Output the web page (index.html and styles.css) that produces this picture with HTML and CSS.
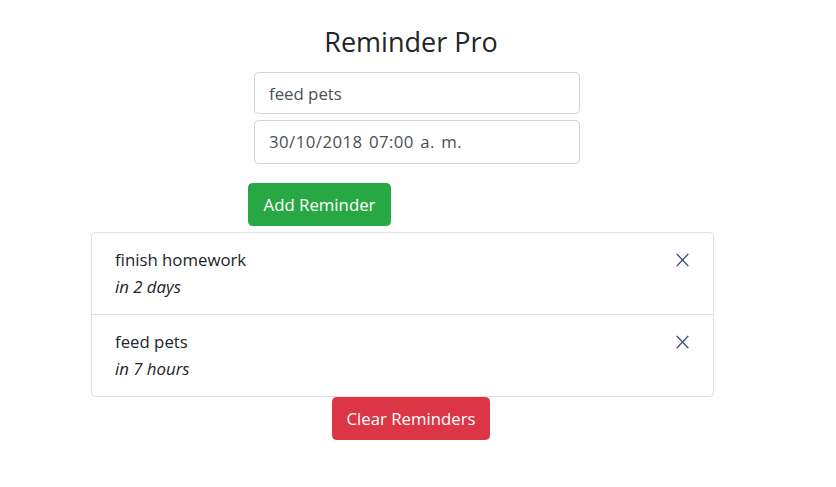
FILE: index.html
```html
<!DOCTYPE html>
<html>
<head>
<meta charset="utf-8">
<link rel="stylesheet" href="styles.css">
</head>
<body>
<div class="app">
  <h3 class="title">Reminder Pro</h3>
  <div class="form">
    <input class="field" type="text" value="feed pets">
    <div class="field field-date">30/10/2018 07:00 a. m.</div>
  </div>
  <button class="btn btn-add">Add Reminder</button>
  <ul class="list">
    <li class="item">
      <div class="item-body">
        <div class="item-text">finish homework</div>
        <div class="item-due">in 2 days</div>
      </div>
      <span class="delete"><svg width="13" height="14" viewBox="0 0 13 14"><path d="M0.7 0.9 L12.3 13.1 M12.3 0.9 L0.7 13.1" stroke="#2b3f7e" stroke-width="1.3" fill="none"/></svg></span>
    </li>
    <li class="item">
      <div class="item-body">
        <div class="item-text">feed pets</div>
        <div class="item-due">in 7 hours</div>
      </div>
      <span class="delete"><svg width="13" height="14" viewBox="0 0 13 14"><path d="M0.7 0.9 L12.3 13.1 M12.3 0.9 L0.7 13.1" stroke="#2b3f7e" stroke-width="1.3" fill="none"/></svg></span>
    </li>
  </ul>
  <button class="btn btn-clear">Clear Reminders</button>
</div>
</body>
</html>
```
FILE: styles.css
```css
* { box-sizing: border-box; }
html, body { margin: 0; padding: 0; background: #fff; }
body {
  font-family: "Open Sans", "Noto Sans", sans-serif;
  font-size: 16.8px;
  line-height: 1.5;
  color: #212529;
}
.app {
  display: flex;
  flex-direction: column;
  align-items: flex-start;
  padding-top: 25px;
}
.title {
  margin: 0 0 14px 0;
  width: 822px;
  text-align: center;
  font-weight: 400;
  font-size: 27px;
  line-height: 33px;
}
.form {
  margin-left: 254px;
  display: flex;
  flex-direction: column;
  gap: 6px;
}
.field {
  width: 326px;
  height: 42px;
  border: 1px solid #ced4da;
  border-radius: 4.4px;
  padding: 0 14px;
  font-family: inherit;
  font-size: 16.8px;
  color: #495057;
  background: #fff;
  display: flex;
  align-items: center;
  outline: none;
}
.field-date {
  height: 44px;
  letter-spacing: 0.45px;
  word-spacing: 1.5px;
}
.btn {
  height: 43px;
  border: 1px solid transparent;
  border-radius: 4.4px;
  padding: 0 8px;
  font-family: inherit;
  font-size: 16.8px;
  color: #fff;
  line-height: 1.5;
  white-space: nowrap;
}
.btn-add {
  margin: 19px 0 0 248px;
  width: 143px;
  background: #28a745;
  border-color: #28a745;
}
.list {
  list-style: none;
  margin: 6px 0 0 91px;
  padding: 0;
  width: 623px;
  border: 1px solid rgba(0,0,0,.125);
  border-radius: 4.4px;
}
.item {
  display: flex;
  justify-content: space-between;
  align-items: flex-start;
  height: 81px;
  padding: 13px 23px 0 23px;
}
.item + .item {
  height: 82px;
  border-top: 1px solid rgba(0,0,0,.125);
}
.item-text, .item-due { line-height: 27px; }
.item-due { font-style: italic; }
.delete {
  display: flex;
  margin-top: 7px;
  margin-right: 1px;
}
.btn-clear {
  margin: 0 0 0 332px;
  width: 158px;
  background: #dc3545;
  border-color: #dc3545;
}
```
